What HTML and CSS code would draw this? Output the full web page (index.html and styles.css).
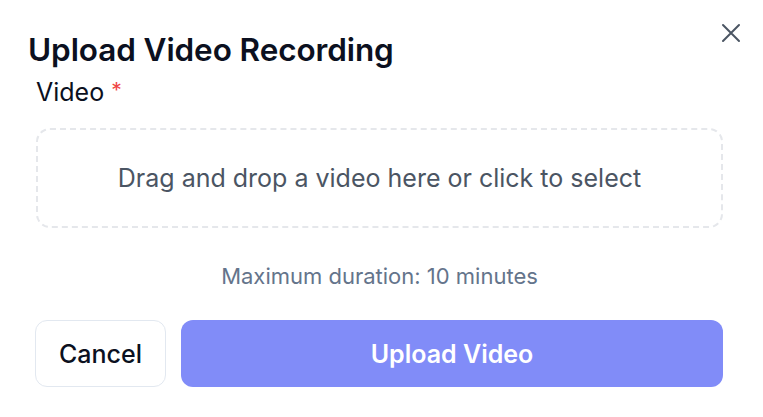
FILE: index.html
```html
<!DOCTYPE html>
<html lang="en">
<head>
<meta charset="utf-8">
<link rel="stylesheet" href="styles.css">
</head>
<body>
<div class="dialog">
  <button class="close" aria-label="Close">
    <svg width="20" height="20" viewBox="0 0 20 20" fill="none" stroke="currentColor" stroke-width="2" stroke-linecap="round"><path d="M2 2 L18 18 M18 2 L2 18"/></svg>
  </button>
  <h1 class="title">Upload Video Recording</h1>
  <div class="field">
    <label class="label">Video <span class="req">*</span></label>
    <div class="dropzone">Drag and drop a video here or click to select</div>
    <p class="hint">Maximum duration: 10 minutes</p>
  </div>
  <div class="actions">
    <button class="btn cancel">Cancel</button>
    <button class="btn primary">Upload Video</button>
  </div>
</div>
</body>
</html>
```
FILE: styles.css
```css
* { box-sizing: border-box; }
html, body { margin: 0; background: #ffffff; }
body { font-family: Inter, "Noto Sans", sans-serif; color: #0b1020; }
.dialog { position: relative; width: 763px; height: 417px; padding: 30px 40px 0 28px; }
.close { position: absolute; top: 23px; left: 721px; border: 0; background: none; padding: 0; color: #4b5563; display: flex; }
.title { margin: 0; font-size: 31.5px; font-weight: 600; letter-spacing: -0.003em; line-height: 40px; color: #0b1020; }
.field { padding-left: 8px; }
.label { display: block; font-size: 25px; font-weight: 400; line-height: 30px; height: 30px; margin-top: 6px; color: #0b1020; }
.req { color: #ef4444; font-size: 21px; vertical-align: 3px; }
.dropzone { margin-top: 22px; height: 100px; border: 2px dashed #e5e7eb; border-radius: 14px; display: flex; align-items: center; justify-content: center; font-size: 25px; color: #4b5563; }
.hint { margin: 33px 0 0; text-align: center; font-size: 22px; color: #64748b; line-height: 30px; }
.actions { display: flex; gap: 15px; margin-top: 29px; padding-left: 7px; }
.btn { height: 67px; border-radius: 12px; font-family: inherit; font-size: 25px; font-weight: 500; }
.cancel { width: 131px; background: #fff; border: 1px solid #e2e8f0; color: #0b1020; }
.primary { flex: 1; background: #818cf8; border: 0; color: #fff; font-weight: 600; }
```
